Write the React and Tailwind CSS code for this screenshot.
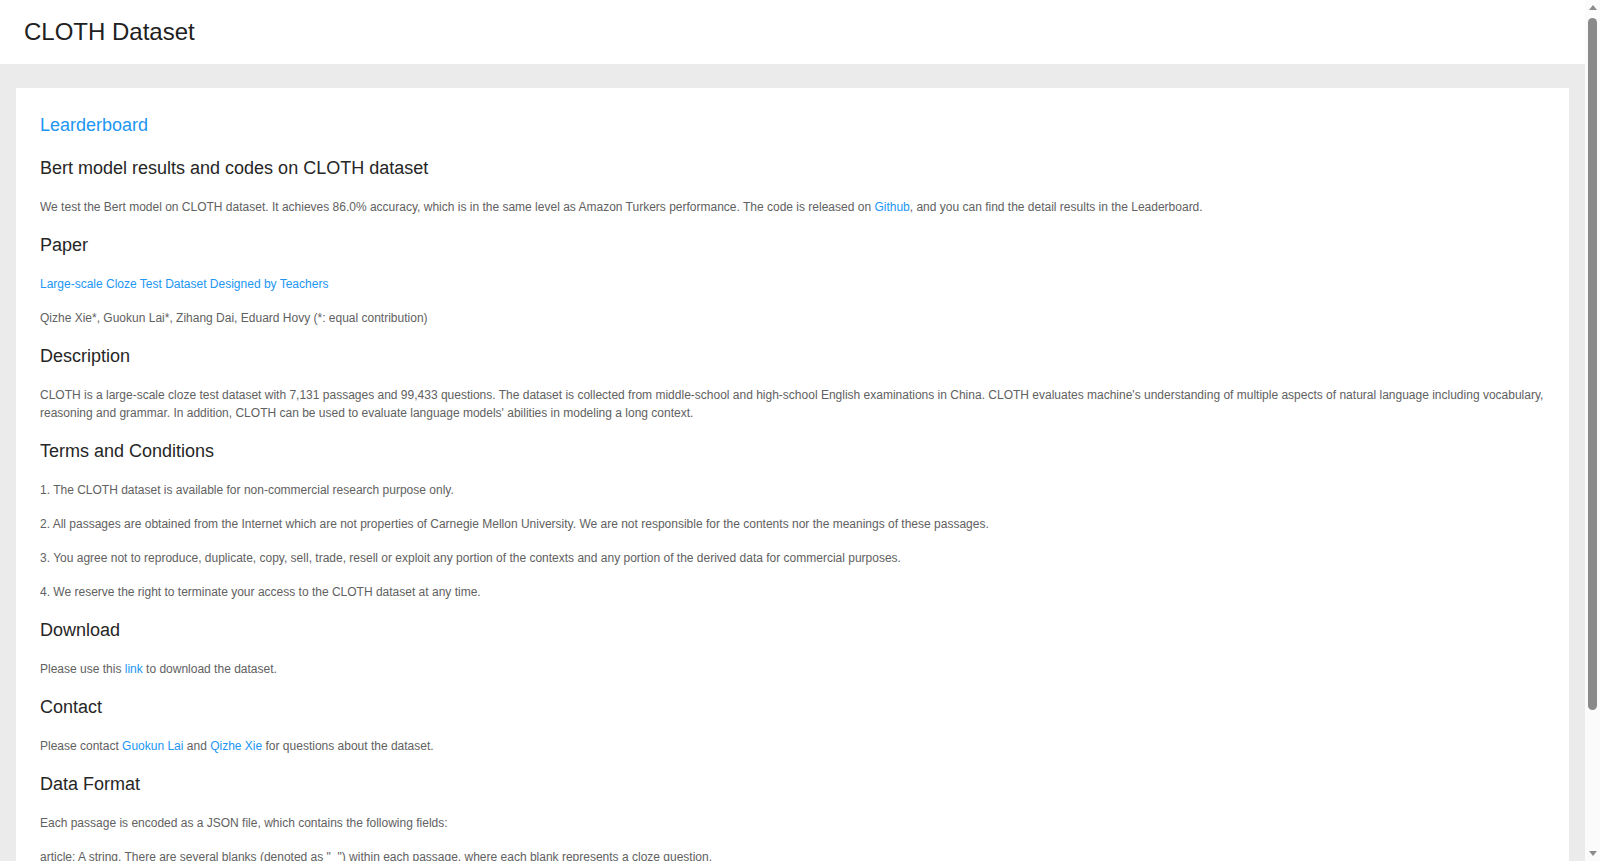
export default function App() {
  const h = "text-[18px] leading-[26px] mb-[17px] text-[#262626] font-normal";
  const p = "text-[12px] leading-[18px] mb-[16px] text-[#616161]";
  const a = "text-[#2196f3] hover:underline";

  return (
    <div className="flex h-[861px] overflow-hidden font-['Liberation_Sans',Arial,sans-serif]">
      <div className="flex-1 overflow-y-auto bg-[#ebebeb] [scrollbar-width:none]">
        <header className="h-[64px] bg-white flex items-center px-[24px]">
          <h1 className="text-[24px] leading-[32px] text-[#212121] font-normal">CLOTH Dataset</h1>
        </header>

        <main className="px-[16px] py-[24px]">
          <section className="bg-white p-[24px] pb-[8px]">
            <h3 className={h}>
              <a href="#" className="text-[#2196f3]">Learderboard</a>
            </h3>

            <h3 className={h}>Bert model results and codes on CLOTH dataset</h3>
            <p className={p}>
              We test the Bert model on CLOTH dataset. It achieves 86.0% accuracy, which is in the same level as Amazon Turkers
              performance. The code is released on <a href="#" className={a}>Github</a>, and you can find the detail results in
              the Leaderboard.
            </p>

            <h3 className={h}>Paper</h3>
            <p className={p}>
              <a href="#" className={a}>Large-scale Cloze Test Dataset Designed by Teachers</a>
            </p>
            <p className={p}>Qizhe Xie*, Guokun Lai*, Zihang Dai, Eduard Hovy (*: equal contribution)</p>

            <h3 className={h}>Description</h3>
            <p className={p}>
              CLOTH is a large-scale cloze test dataset with 7,131 passages and 99,433 questions. The dataset is collected from
              middle-school and high-school English examinations in China. CLOTH evaluates machine's understanding of multiple
              aspects of natural language including vocabulary, reasoning and grammar. In addition, CLOTH can be used to evaluate
              language models' abilities in modeling a long context.
            </p>

            <h3 className={h}>Terms and Conditions</h3>
            <p className={p}>1. The CLOTH dataset is available for non-commercial research purpose only.</p>
            <p className={p}>
              2. All passages are obtained from the Internet which are not properties of Carnegie Mellon University. We are not
              responsible for the contents nor the meanings of these passages.
            </p>
            <p className={p}>
              3. You agree not to reproduce, duplicate, copy, sell, trade, resell or exploit any portion of the contexts and any
              portion of the derived data for commercial purposes.
            </p>
            <p className={p}>4. We reserve the right to terminate your access to the CLOTH dataset at any time.</p>

            <h3 className={h}>Download</h3>
            <p className={p}>
              Please use this <a href="#" className={a}>link</a> to download the dataset.
            </p>

            <h3 className={h}>Contact</h3>
            <p className={p}>
              Please contact <a href="#" className={a}>Guokun Lai</a> and <a href="#" className={a}>Qizhe Xie</a> for questions
              about the dataset.
            </p>

            <h3 className={h}>Data Format</h3>
            <p className={p}>Each passage is encoded as a JSON file, which contains the following fields:</p>
            <p className={p}>
              article: A string. There are several blanks (denoted as "_") within each passage, where each blank represents a
              cloze question.
            </p>
            <p className={p}>options: A list of lists. Each list contains four candidate answers for a blank.</p>
            <p className={p}>answers: A list. Each element is the correct answer for a blank.</p>
          </section>
        </main>
      </div>

      {/* window scrollbar: arrows, track and thumb */}
      <div className="w-[15px] shrink-0 bg-[#fbfbfb] flex flex-col items-center">
        <div className="h-[15px] flex items-center justify-center">
          <div className="w-0 h-0 border-l-[4.5px] border-r-[4.5px] border-b-[5px] border-l-transparent border-r-transparent border-b-[#8c8c8c]" />
        </div>
        <div className="w-[9px] h-[692px] mt-[3px] rounded-t-full rounded-b-full bg-[#8a8a8a]" />
        <div className="flex-1" />
        <div className="h-[15px] flex items-center justify-center">
          <div className="w-0 h-0 border-l-[4.5px] border-r-[4.5px] border-t-[5px] border-l-transparent border-r-transparent border-t-[#8c8c8c]" />
        </div>
      </div>
    </div>
  );
}
